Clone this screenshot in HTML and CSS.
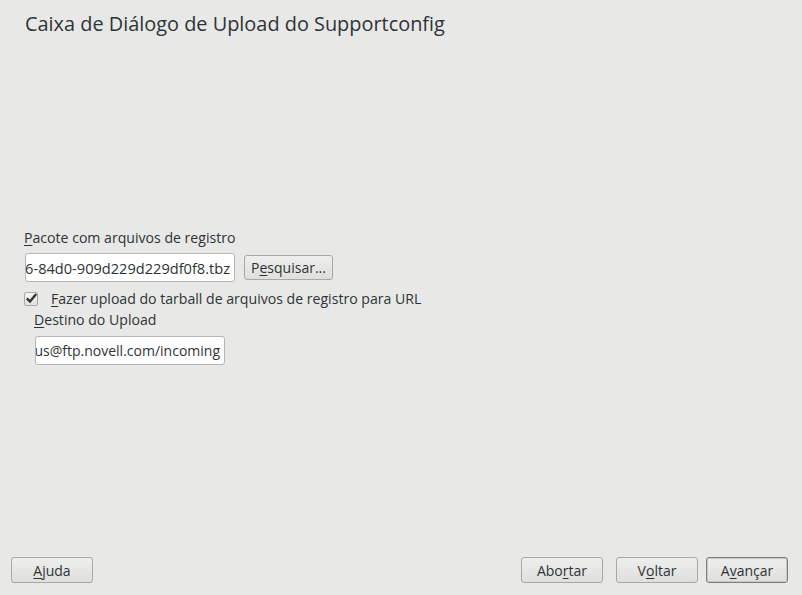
FILE: index.html
```html
<!DOCTYPE html>
<html lang="pt">
<head>
<meta charset="utf-8">
<title>Supportconfig</title>
<link rel="stylesheet" href="styles.css">
</head>
<body>
<div class="window">
  <h1 class="title">Caixa de Diálogo de Upload do Supportconfig</h1>
  <main class="content">
    <div class="form">
      <label class="label"><u>P</u>acote com arquivos de registro</label>
      <div class="row">
        <div class="input input-file"><span>/var/log/scc_sles_a1b2c3d4e5f6-84d0-909d229d229df0f8.tbz</span></div>
        <button class="btn btn-browse">P<u>e</u>squisar...</button>
      </div>
      <div class="check-row">
        <span class="checkbox">
          <svg width="15" height="15" viewBox="0 0 15 15"><path d="M2.8 7.4 L6 10.6 L12.2 3" fill="none" stroke="#333" stroke-width="2.3"/></svg>
        </span>
        <span class="check-label"><u>F</u>azer upload do tarball de arquivos de registro para URL</span>
      </div>
      <div class="sub">
        <label class="label"><u>D</u>estino do Upload</label>
        <div class="input input-url"><span>ftp://support-us@ftp.novell.com/incoming</span></div>
      </div>
    </div>
  </main>
  <footer class="footer">
    <button class="btn btn-nav"><u>A</u>juda</button>
    <div class="right">
      <button class="btn btn-nav">Abo<u>r</u>tar</button>
      <button class="btn btn-nav btn-voltar">V<u>o</u>ltar</button>
      <button class="btn btn-nav btn-default">A<u>v</u>ançar</button>
    </div>
  </footer>
</div>
</body>
</html>
```

FILE: styles.css
```css
html, body {
  margin: 0;
  padding: 0;
  background: #e8e8e7;
}
body {
  font-family: "Open Sans", "Noto Sans", sans-serif;
  color: #2e3436;
}
.window {
  width: 802px;
  height: 595px;
  display: flex;
  flex-direction: column;
  box-sizing: border-box;
}
u {
  text-decoration: underline;
  text-underline-offset: 2px;
}
.title {
  margin: 0;
  padding: 10px 0 0 25px;
  font-size: 19.9px;
  font-weight: normal;
  line-height: 28px;
  color: #2e3436;
}
.content {
  flex: 1;
  display: flex;
  flex-direction: column;
  padding: 190px 0 0 24px;
}
.form {
  display: flex;
  flex-direction: column;
}
.label {
  font-size: 14.1px;
  line-height: 20px;
  color: #2e3436;
}
.row {
  display: flex;
  align-items: center;
  gap: 10px;
  margin-top: 5px;
}
.input {
  box-sizing: border-box;
  height: 29px;
  background: #fff;
  border: 1px solid #b6b6b3;
  border-radius: 3px;
  display: flex;
  align-items: center;
  justify-content: flex-end;
  overflow: hidden;
  white-space: nowrap;
  font-size: 14px;
  padding: 0 4px 0 2px;
  color: #2e3436;
}
.input-file {
  width: 210px;
  margin-left: 1px;
  font-size: 14.6px;
  padding-right: 4px;
}
.btn {
  font-family: "Open Sans", "Noto Sans", sans-serif;
  font-size: 14px;
  color: #2e3436;
  background: linear-gradient(#eeeeec, #dfdfdd);
  border: 1px solid #a8a8a5;
  border-radius: 3px;
  box-sizing: border-box;
  padding: 0;
  cursor: default;
}
.btn-browse {
  width: 89px;
  height: 25px;
  margin-left: -1px;
}
.check-row {
  display: flex;
  align-items: center;
  margin-top: 7px;
  height: 20px;
}
.checkbox {
  width: 14px;
  height: 14px;
  box-sizing: border-box;
  border: 1px solid #a8a8a5;
  border-radius: 2px;
  background: linear-gradient(#f4f4f3, #e2e2e0);
  position: relative;
}
.checkbox svg {
  position: absolute;
  left: -1px;
  top: -2px;
}
.check-label {
  margin-left: 13px;
  font-size: 14.1px;
  line-height: 20px;
}
.sub {
  display: flex;
  flex-direction: column;
  padding-left: 10px;
  margin-top: 1px;
}
.input-url {
  width: 190px;
  margin-top: 6px;
  margin-left: 1px;
}
.footer {
  display: flex;
  justify-content: space-between;
  align-items: center;
  padding: 0 14px 12px 11px;
}
.right {
  display: flex;
  gap: 13px;
}
.btn-nav {
  width: 82px;
  height: 26px;
}
.btn-voltar {
  margin-right: -5px;
}
.btn-default {
  border-color: #7d7d7b;
  box-shadow: inset 0 0 0 1px #c9c9c6;
}
```
